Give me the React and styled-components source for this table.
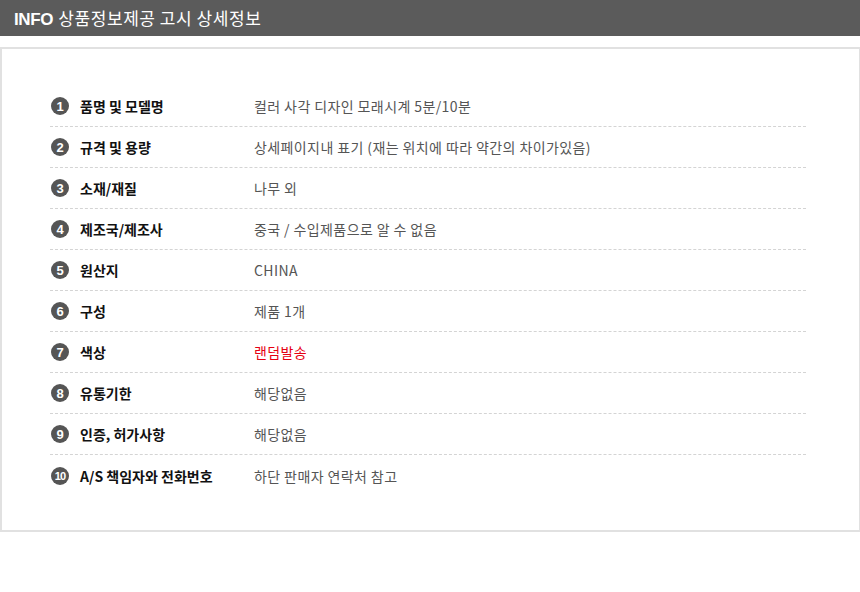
import React from 'react';
import styled, { createGlobalStyle } from 'styled-components';

const items = [
  { label: '품명 및 모델명', value: '컬러 사각 디자인 모래시계 5분/10분' },
  { label: '규격 및 용량', value: '상세페이지내 표기 (재는 위치에 따라 약간의 차이가있음)' },
  { label: '소재/재질', value: '나무 외' },
  { label: '제조국/제조사', value: '중국 / 수입제품으로 알 수 없음' },
  { label: '원산지', value: 'CHINA' },
  { label: '구성', value: '제품 1개' },
  { label: '색상', value: '랜덤발송', accent: true },
  { label: '유통기한', value: '해당없음' },
  { label: '인증, 허가사항', value: '해당없음' },
  { label: 'A/S 책임자와 전화번호', value: '하단 판매자 연락처 참고' },
];

const GlobalStyle = createGlobalStyle`
  body {
    margin: 0;
    background: #fff;
    font-family: "Noto Sans CJK KR", "Noto Sans", sans-serif;
  }
`;

const App = () => (
  <>
    <GlobalStyle />
    <TitleBar>
      <strong>INFO</strong> 상품정보제공 고시 상세정보
    </TitleBar>
    <Box>
      <List>
        {items.map(({ label, value, accent }, i) => (
          <Row key={label}>
            <Num small={i + 1 >= 10}>{i + 1}</Num>
            <Label>{label}</Label>
            <Value accent={accent}>{value}</Value>
          </Row>
        ))}
      </List>
    </Box>
  </>
);

export default App;

const TitleBar = styled.div`
  height: 36px;
  background: #5b5b5b;
  color: #fff;
  font-size: 17px;
  line-height: 36px;
  padding-left: 14px;
  letter-spacing: 0.55px;
  strong {
    font-family: "Liberation Sans", Arial, sans-serif;
    font-weight: 700;
    letter-spacing: -0.4px;
    margin-right: 1px;
  }
`;

const Box = styled.div`
  margin-top: 11px;
  height: 485px;
  box-sizing: border-box;
  border: 2px solid #e1e1e1;
  border-right-width: 1px;
  padding: 37px 0 0 48px;
`;

const List = styled.ul`
  list-style: none;
  margin: 0;
  padding: 0;
  width: 756px;
`;

const Row = styled.li`
  display: flex;
  align-items: center;
  height: 41px;
  box-sizing: border-box;
  border-bottom: 1px dashed #d4d4d4;
  font-size: 14px;
  &:last-child {
    border-bottom: none;
  }
`;

const Num = styled.span`
  display: flex;
  align-items: center;
  justify-content: center;
  flex: none;
  width: 18px;
  height: 18px;
  margin-left: 1px;
  border-radius: 50%;
  background: #555;
  color: #fff;
  font-family: "Liberation Sans", Arial, sans-serif;
  font-weight: 700;
  font-size: ${(p) => (p.small ? '11px' : '13px')};
  letter-spacing: ${(p) => (p.small ? '-0.8px' : '0')};
`;

const Label = styled.span`
  width: 174px;
  margin-left: 11px;
  color: #111;
  font-weight: 700;
  letter-spacing: 0;
`;

const Value = styled.span`
  color: ${(p) => (p.accent ? '#e60012' : '#555')};
  letter-spacing: 0.4px;
`;
